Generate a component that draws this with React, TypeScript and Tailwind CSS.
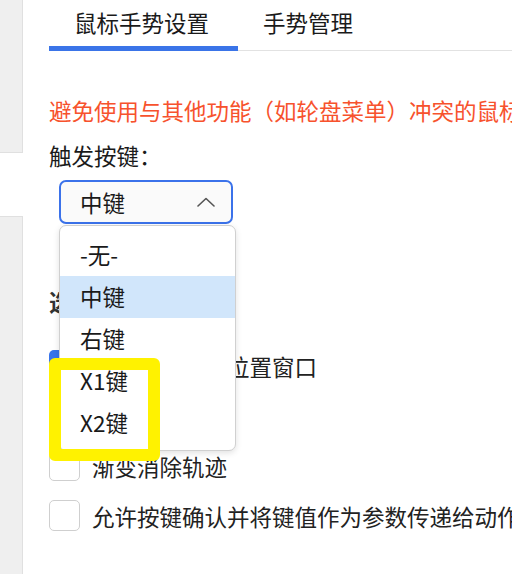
import { Check } from "lucide-react";

// ── Options ───────────────────────────────────────────────────────────────────

const TRIGGER_KEYS = ["-无-", "中键", "右键", "X1键", "X2键"];

const OPTIONS = [
  { label: "显示手势提示位置窗口", checked: true },
  { label: "显示轨迹", checked: false },
  { label: "渐变消除轨迹", checked: false },
  { label: "允许按键确认并将键值作为参数传递给动作", checked: false },
];

// ── Checkbox row ──────────────────────────────────────────────────────────────

function OptionRow({ label, checked }: { label: string; checked: boolean }) {
  return (
    <div className="h-[50px] flex items-center gap-[12px] whitespace-nowrap">
      <div
        className={[
          "shrink-0 w-[31px] h-[31px] rounded-[5px] flex items-center justify-center",
          checked ? "bg-[#3874ea]" : "bg-white border-[1.5px] border-[#cfcfcf]",
        ].join(" ")}
      >
        {checked && <Check size={20} strokeWidth={3} className="text-white" />}
      </div>
      <span className="text-[22.5px] leading-[30px] text-[#222] translate-y-[1px]">{label}</span>
    </div>
  );
}

// ── Page ──────────────────────────────────────────────────────────────────────

export default function App() {
  return (
    <div
      className="relative w-[512px] h-[574px] overflow-hidden bg-white flex"
      style={{ fontFamily: '"Noto Sans CJK SC", "Noto Sans", sans-serif' }}
    >
      {/* Sidebar edge */}
      <div className="w-[23px] shrink-0 flex flex-col">
        <div className="h-[153px] bg-[#efefef] border-r border-b border-[#e0e0e0]" />
        <div className="h-[63px]" />
        <div className="flex-1 bg-[#efefef] border-r border-t border-[#e0e0e0]" />
      </div>

      <main className="flex-1 min-w-0 pl-[26px]">
        {/* Tabs */}
        <div className="flex h-[51px] border-b border-[#e2e2e2] whitespace-nowrap">
          <div className="relative pl-[25px] pr-[29px] pt-[6px] text-[22.5px] leading-[32px] text-[#1a1a1a]">
            鼠标手势设置
            <div className="absolute left-0 right-0 bottom-[-1px] h-[5px] bg-[#3a74e8]" />
          </div>
          <div className="pl-[25px] pt-[6px] text-[22.5px] leading-[32px] text-[#1a1a1a]">手势管理</div>
        </div>

        <p className="mt-[44px] text-[22.5px] leading-[30px] text-[#f7522d] whitespace-nowrap">
          避免使用与其他功能（如轮盘菜单）冲突的鼠标按键
        </p>

        <p className="mt-[15px] text-[22.5px] leading-[30px] text-[#1a1a1a]">触发按键：</p>

        {/* Select */}
        <div className="mt-[10px] ml-[10px] w-[174px] h-[44px] rounded-[7px] border-2 border-[#3b72ea] bg-[#fafafa] flex items-center justify-between pl-[19px] pr-[16px]">
          <span className="text-[22.5px] leading-[30px] text-[#1a1a1a]">中键</span>
          <svg width="18" height="10" viewBox="0 0 18 10" fill="none" stroke="#555" strokeWidth="1.6" strokeLinecap="round" strokeLinejoin="round">
            <polyline points="1 9 9 1.5 17 9" />
          </svg>
        </div>

        <h3 className="mt-[62px] text-[22.5px] leading-[30px] font-bold text-[#333]">选项</h3>

        <div className="mt-[24px] flex flex-col">
          {OPTIONS.map((o) => (
            <OptionRow key={o.label} label={o.label} checked={o.checked} />
          ))}
        </div>
      </main>

      {/* Dropdown menu */}
      <div className="absolute left-[59px] top-[225px] w-[177px] h-[226px] py-[8px] bg-white rounded-[7px] border border-[#d0d0d0] shadow-[0_2px_6px_rgba(0,0,0,0.12)]">
        {TRIGGER_KEYS.map((k) => (
          <div
            key={k}
            className={`h-[42px] flex items-center pl-[20px] text-[22.5px] text-[#1a1a1a] ${k === "中键" ? "bg-[#d1e6fb]" : ""}`}
          >
            {k}
          </div>
        ))}
      </div>

      {/* Annotation highlight */}
      <div className="absolute left-[49px] top-[358px] w-[111px] h-[103px] border-[12px] border-[#fff200] rounded-[6px]" />
    </div>
  );
}
